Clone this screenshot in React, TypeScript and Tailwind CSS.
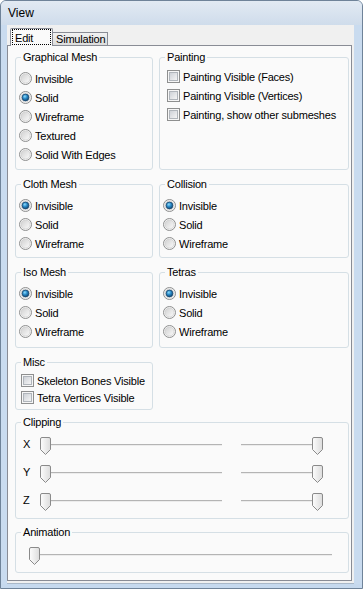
import React, { useId } from "react";

function Radio({ checked }: { checked?: boolean }) {
  const id = useId().replace(/:/g, "");
  return (
    <svg width="13" height="13" viewBox="0 0 13 13" className="shrink-0">
      <defs>
        <linearGradient id={`o${id}`} x1="0" y1="0" x2="1" y2="1">
          <stop offset="0" stopColor="#d0d0d0" />
          <stop offset="1" stopColor="#fbfbfb" />
        </linearGradient>
        <radialGradient id={`d${id}`} cx="0.4" cy="0.35" r="0.7">
          <stop offset="0" stopColor="#8fdcfb" />
          <stop offset="0.45" stopColor="#2a8bc9" />
          <stop offset="1" stopColor="#0f3f66" />
        </radialGradient>
      </defs>
      <circle cx="6.5" cy="6.5" r="6" fill="#f4f4f4" stroke="#8e8f8f" />
      <circle cx="6.5" cy="6.5" r="4.5" fill={`url(#o${id})`} stroke="#c9c9c9" strokeWidth="0.6" />
      {checked && <circle cx="6.5" cy="6.5" r="3.4" fill={`url(#d${id})`} stroke="#1b4a72" strokeWidth="0.8" />}
    </svg>
  );
}

function Check() {
  const id = useId().replace(/:/g, "");
  return (
    <svg width="13" height="13" viewBox="0 0 13 13" className="shrink-0">
      <defs>
        <linearGradient id={`c${id}`} x1="0" y1="0" x2="1" y2="1">
          <stop offset="0" stopColor="#cbcfd5" />
          <stop offset="1" stopColor="#f7f7f7" />
        </linearGradient>
      </defs>
      <rect x="0.5" y="0.5" width="12" height="12" fill="#f6f6f6" stroke="#8e8f8f" />
      <rect x="2.5" y="2.5" width="8" height="8" fill={`url(#c${id})`} stroke="#b0b5bb" />
    </svg>
  );
}

function Thumb() {
  const id = useId().replace(/:/g, "");
  return (
    <svg width="11" height="18" viewBox="0 0 11 18">
      <defs>
        <linearGradient id={`t${id}`} x1="0" y1="0" x2="1" y2="0">
          <stop offset="0" stopColor="#fdfdfd" />
          <stop offset="1" stopColor="#dcdcdc" />
        </linearGradient>
      </defs>
      <path
        d="M2 0.5 H9 Q10.5 0.5 10.5 2 V12.5 L5.5 17.5 L0.5 12.5 V2 Q0.5 0.5 2 0.5 Z"
        fill={`url(#t${id})`}
        stroke="#8a8a8a"
      />
    </svg>
  );
}

function Slider({ at, className }: { at: "left" | "right"; className: string }) {
  return (
    <div className={`relative h-[18px] ${className}`}>
      <div className="absolute left-[2px] right-[1px] top-[7px] h-[1px] bg-[#b4b4b4]" />
      <div className="absolute left-[2px] right-[1px] top-[8px] h-[1px] bg-[#ececec]" />
      <div className={`absolute top-0 ${at === "left" ? "left-0" : "right-0"}`}>
        <Thumb />
      </div>
    </div>
  );
}

function Group({ title, className, children }: { title: string; className: string; children?: React.ReactNode }) {
  return (
    <div className={`relative border border-[#d5dfe5] rounded-[3px] ${className}`}>
      <span className="absolute left-[5px] top-[-8px] px-[2px] bg-[#fafafa] leading-[14px] whitespace-nowrap">
        {title}
      </span>
      {children}
    </div>
  );
}

function RadioRow({ label, checked }: { label: string; checked?: boolean }) {
  return (
    <div className="h-[19px] flex items-center gap-[3px]">
      <Radio checked={checked} />
      <span className="leading-[14px]">{label}</span>
    </div>
  );
}

function CheckRow({ label, h }: { label: string; h: string }) {
  return (
    <div className={`${h} flex items-center gap-[3px]`}>
      <Check />
      <span className="leading-[14px] whitespace-nowrap">{label}</span>
    </div>
  );
}

function ThreeRadio() {
  return (
    <div className="pl-[3px] pt-[11px]">
      <RadioRow label="Invisible" checked />
      <RadioRow label="Solid" />
      <RadioRow label="Wireframe" />
    </div>
  );
}

function ClipRow({ label }: { label: string }) {
  return (
    <div className="flex items-start h-[18px]">
      <span className="w-[17px] leading-[14px]">{label}</span>
      <Slider at="left" className="w-[183px]" />
      <div className="w-[16px]" />
      <Slider at="right" className="w-[84px]" />
    </div>
  );
}

export default function App() {
  return (
    <div className="w-[363px] h-[589px] overflow-hidden bg-[#c6d9ee] rounded-t-[6px] border border-[#6f8399] font-['Liberation_Sans',Arial,sans-serif] text-[11px] tracking-[-0.2px] text-black flex flex-col">
      <div className="h-[24px] shrink-0 flex items-center pl-[7px] text-[12px] tracking-normal bg-gradient-to-b from-[#e2eaf3] to-[#cfdceb]">
        View
      </div>
      <div className="flex pl-[6px] bg-[#c9dbef]">
        <div className="w-[347px] h-[559px] bg-[#f0f0f0] flex flex-col border-b border-[#a9b8c8]">
          <div className="h-[20px] flex items-end pl-[3px]">
            <div className="relative z-10 -mb-px w-[43px] h-[18px] border border-b-0 border-[#898c95] bg-[#fafafa] rounded-t-[2px] pl-[4px] pt-[2px]">
              <div className="absolute left-[1px] right-[1px] top-0 bottom-[1px] border border-dotted border-black" />
              <span className="block leading-[14px]">Edit</span>
            </div>
            <div className="-ml-px w-[56px] h-[13px] border border-b-0 border-[#898c95] bg-gradient-to-b from-[#f2f2f2] to-[#dcdcdc] pl-[3px] leading-[12px]">
              Simulation
            </div>
          </div>
          <div className="w-[345px] h-[536px] border border-[#898c95] bg-[#fafafa] pl-[7px] pt-[11px]">
            <div className="flex gap-[6px]">
              <Group title="Graphical Mesh" className="w-[138px] h-[113px]">
                <div className="pl-[3px] pt-[11px]">
                  <RadioRow label="Invisible" />
                  <RadioRow label="Solid" checked />
                  <RadioRow label="Wireframe" />
                  <RadioRow label="Textured" />
                  <RadioRow label="Solid With Edges" />
                </div>
              </Group>
              <Group title="Painting" className="w-[190px] h-[113px]">
                <div className="pl-[7px] pt-[9px]">
                  <CheckRow label="Painting Visible (Faces)" h="h-[19px]" />
                  <CheckRow label="Painting Visible (Vertices)" h="h-[19px]" />
                  <CheckRow label="Painting, show other submeshes" h="h-[19px]" />
                </div>
              </Group>
            </div>
            <div className="flex gap-[6px] mt-[14px]">
              <Group title="Cloth Mesh" className="w-[138px] h-[74px]">
                <ThreeRadio />
              </Group>
              <Group title="Collision" className="w-[190px] h-[74px]">
                <ThreeRadio />
              </Group>
            </div>
            <div className="flex gap-[6px] mt-[14px]">
              <Group title="Iso Mesh" className="w-[138px] h-[76px]">
                <ThreeRadio />
              </Group>
              <Group title="Tetras" className="w-[190px] h-[76px]">
                <ThreeRadio />
              </Group>
            </div>
            <Group title="Misc" className="w-[138px] h-[48px] mt-[14px]">
              <div className="pl-[5px] pt-[9px]">
                <CheckRow label="Skeleton Bones Visible" h="h-[17px]" />
                <CheckRow label="Tetra Vertices Visible" h="h-[17px]" />
              </div>
            </Group>
            <Group title="Clipping" className="w-[334px] h-[97px] mt-[12px]">
              <div className="pl-[7px] pt-[14px] flex flex-col gap-[10px]">
                <ClipRow label="X" />
                <ClipRow label="Y" />
                <ClipRow label="Z" />
              </div>
            </Group>
            <Group title="Animation" className="w-[334px] h-[41px] mt-[13px]">
              <div className="pl-[13px] pt-[14px]">
                <Slider at="left" className="w-[304px]" />
              </div>
            </Group>
          </div>
        </div>
      </div>
    </div>
  );
}
